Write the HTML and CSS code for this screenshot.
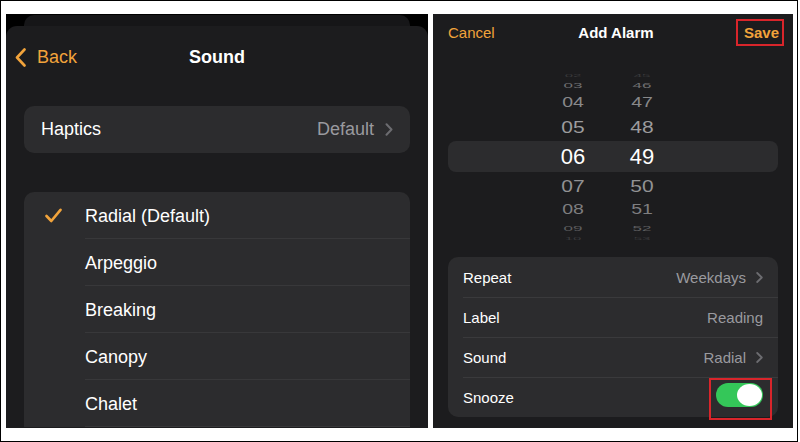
FILE: index.html
```html
<!DOCTYPE html>
<html lang="en">

<head>
    <meta charset="UTF-8" />
    <meta name="viewport" content="width=device-width, initial-scale=1.0" />
    <title>Sound / Add Alarm</title>
    <link rel="stylesheet" href="styles.css">
</head>

<body>
    <div class="frame">
        <!-- left screen: sound picker sheet -->
        <section class="stack">
            <div class="sheet-behind"></div>
            <div class="sheet">
                <header class="nav">
                    <a class="back">
                        <svg width="11" height="19" viewBox="0 0 11 19"><path d="M9.5 1.5 L2 9.5 L9.5 17.5" fill="none" stroke="#f1a33b" stroke-width="2.6" stroke-linecap="round" stroke-linejoin="round"/></svg>
                        <span>Back</span>
                    </a>
                    <h1 class="nav-title">Sound</h1>
                    <span></span>
                </header>

                <div class="group">
                    <div class="cell">
                        <span>Haptics</span>
                        <span class="cell-value">Default
                            <svg width="8" height="13" viewBox="0 0 8 13"><path d="M1.5 1.2 L6.5 6.5 L1.5 11.8" fill="none" stroke="#6c6c70" stroke-width="2" stroke-linecap="round" stroke-linejoin="round"/></svg>
                        </span>
                    </div>
                </div>

                <ul class="group tones">
                    <li class="tone">
                        <span class="tone-lead">
                            <svg width="17" height="15" viewBox="0 0 17 15"><path d="M1.5 8 L6.3 13 L15.5 1.8" fill="none" stroke="#f1a33b" stroke-width="2.6" stroke-linecap="round" stroke-linejoin="round"/></svg>
                        </span>
                        <span class="tone-name">Radial (Default)</span>
                    </li>
                    <li class="tone"><span class="tone-lead"></span><span class="tone-name">Arpeggio</span></li>
                    <li class="tone"><span class="tone-lead"></span><span class="tone-name">Breaking</span></li>
                    <li class="tone"><span class="tone-lead"></span><span class="tone-name">Canopy</span></li>
                    <li class="tone"><span class="tone-lead"></span><span class="tone-name">Chalet</span></li>
                </ul>
            </div>
        </section>

        <!-- right screen: add alarm -->
        <section class="alarm">
            <header class="alarm-head">
                <span class="link">Cancel</span>
                <h2 class="alarm-title">Add Alarm</h2>
                <span class="save-wrap"><span class="save">Save</span></span>
            </header>

            <div class="wheel">
                <div class="wheel-row w-far"><span>02</span><span>45</span></div>
                <div class="wheel-row w-3"><span>03</span><span>46</span></div>
                <div class="wheel-row w-2"><span>04</span><span>47</span></div>
                <div class="wheel-row w-1"><span>05</span><span>48</span></div>
                <div class="wheel-row w-0"><span>06</span><span>49</span></div>
                <div class="wheel-row w-1 low"><span>07</span><span>50</span></div>
                <div class="wheel-row w-2 low"><span>08</span><span>51</span></div>
                <div class="wheel-row w-3 low"><span>09</span><span>52</span></div>
                <div class="wheel-row w-far"><span>10</span><span>53</span></div>
            </div>

            <ul class="settings">
                <li class="setting">
                    <div class="setting-body">
                        <span>Repeat</span>
                        <span class="setting-value">Weekdays
                            <svg width="7" height="11" viewBox="0 0 7 11"><path d="M1.2 1 L5.8 5.5 L1.2 10" fill="none" stroke="#6c6c70" stroke-width="1.8" stroke-linecap="round" stroke-linejoin="round"/></svg>
                        </span>
                    </div>
                </li>
                <li class="setting">
                    <div class="setting-body">
                        <span>Label</span>
                        <span class="setting-value">Reading</span>
                    </div>
                </li>
                <li class="setting">
                    <div class="setting-body">
                        <span>Sound</span>
                        <span class="setting-value">Radial
                            <svg width="7" height="11" viewBox="0 0 7 11"><path d="M1.2 1 L5.8 5.5 L1.2 10" fill="none" stroke="#6c6c70" stroke-width="1.8" stroke-linecap="round" stroke-linejoin="round"/></svg>
                        </span>
                    </div>
                </li>
                <li class="setting">
                    <div class="setting-body">
                        <span>Snooze</span>
                        <span class="toggle"><span class="knob"></span><span class="mark"></span></span>
                    </div>
                </li>
            </ul>
        </section>
    </div>
</body>

</html>
```

FILE: styles.css
```css
body {
    margin: 0;
    background: #fff;
    font-family: "Liberation Sans", Arial, sans-serif;
}

.frame {
    width: 798px;
    height: 442px;
    box-sizing: border-box;
    border: 1px solid #000;
    padding: 13px 4px 13px 5px;
    display: flex;
    gap: 5px;
}

/* ---------- left ---------- */

.stack {
    width: 422px;
    background: #000;
    display: flex;
    flex-direction: column;
    overflow: hidden;
}

.sheet-behind {
    height: 11px;
    margin: 1px 18px 0;
    background: #161618;
    border-radius: 10px 10px 0 0;
    flex: none;
}

.sheet {
    flex: 1;
    background: #1c1c1e;
    border-radius: 11px 11px 0 0;
    color: #fff;
    font-size: 18px;
}

.nav {
    height: 62px;
    display: grid;
    grid-template-columns: 1fr auto 1fr;
    align-items: center;
}

.back {
    display: flex;
    align-items: center;
    gap: 11px;
    padding-left: 9px;
    color: #f1a33b;
}

.nav-title {
    margin: 0;
    font-size: 18px;
    font-weight: 700;
}

.group {
    margin: 18px 18px 0;
    padding: 0;
    list-style: none;
    background: #2c2c2e;
    border-radius: 10px;
}

.cell {
    height: 47px;
    display: flex;
    align-items: center;
    justify-content: space-between;
    padding: 0 17px;
}

.cell-value {
    display: flex;
    align-items: center;
    gap: 11px;
    color: #9a9a9f;
}

.tones {
    margin-top: 39px;
    border-radius: 10px 10px 0 0;
}

.tone {
    height: 47px;
    display: flex;
}

.tone-lead {
    width: 61px;
    flex: none;
    display: flex;
    align-items: center;
    padding-left: 21px;
    box-sizing: border-box;
}

.tone-name {
    flex: 1;
    display: flex;
    align-items: center;
    padding-top: 2px;
    border-bottom: 1px solid #38383a;
}

/* ---------- right ---------- */

.alarm {
    width: 360px;
    background: #1c1c1e;
    color: #fff;
    font-size: 15px;
}

.alarm-head {
    height: 36px;
    display: grid;
    grid-template-columns: 1fr auto 1fr;
    align-items: center;
    padding: 0 9px 0 15px;
}

.link {
    color: #f1a33b;
}

.alarm-title {
    margin: 0;
    font-size: 15px;
    font-weight: 700;
}

.save-wrap {
    justify-self: end;
}

.save {
    display: inline-block;
    color: #f1a33b;
    font-weight: 700;
    padding: 3px 3px 3px 6px;
    border: 2px solid #d9252b;
    line-height: 17px;
}

.wheel {
    margin: 22px 15px 0;
}

.wheel-row {
    display: flex;
    align-items: center;
    padding-left: 100px;
    gap: 19px;
    overflow: hidden;
}

.wheel-row span {
    width: 50px;
    text-align: center;
    line-height: 1;
}

.w-far {
    height: 7px;
    font-size: 15px;
    color: #3a3a3c;
}

.w-far span {
    transform: scaleY(0.2);
}

.w-3 {
    height: 13px;
    font-size: 17px;
    color: #6e6e70;
}

.w-3 span {
    transform: scaleY(0.45);
}

.w-3.low {
    height: 14px;
    color: #5c5c5e;
}

.w-2 {
    height: 22px;
    font-size: 19.5px;
    color: #88888a;
}

.w-2 span {
    transform: scaleY(0.72);
}

.w-2.low {
    color: #7e7e80;
}

.w-1 {
    height: 27px;
    font-size: 21px;
    color: #9c9c9e;
}

.w-1 span {
    transform: scaleY(0.8);
}

.w-1.low {
    color: #929294;
}

.w-0 {
    height: 31px;
    font-size: 22px;
    background: #2c2c2e;
    border-radius: 8px;
    color: #fff;
}

.settings {
    margin: 15px 15px 0;
    padding: 0;
    list-style: none;
    background: #2c2c2e;
    border-radius: 10px;
}

.setting {
    padding-left: 15px;
}

.setting-body {
    height: 40px;
    box-sizing: border-box;
    display: flex;
    align-items: center;
    justify-content: space-between;
    padding-right: 15px;
    border-top: 1px solid #3a3a3c;
}

.setting:first-child .setting-body {
    border-top: 0;
}

.setting-value {
    display: flex;
    align-items: center;
    gap: 10px;
    color: #9a9a9f;
}

.toggle {
    position: relative;
    width: 47px;
    height: 24px;
    margin-bottom: 5px;
    background: #34c759;
    border-radius: 12px;
}

.knob {
    position: absolute;
    top: 1px;
    right: 1px;
    width: 25px;
    height: 22px;
    border-radius: 50%;
    background: #fff;
}

/* red highlight drawn over the switch */
.mark {
    position: absolute;
    left: -7px;
    right: -9px;
    top: -5px;
    bottom: -13px;
    border: 2px solid #d9252b;
}
```
